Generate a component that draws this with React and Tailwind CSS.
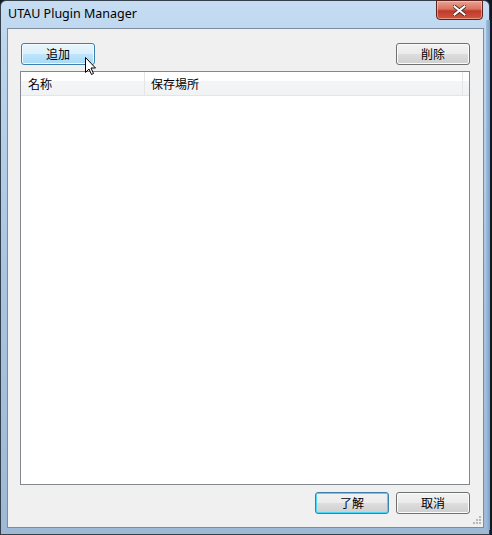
import React from "react";

const jp = { fontFamily: '"Noto Sans CJK JP", "Noto Sans", sans-serif' };

function Btn({ children, variant = "normal", className = "" }) {
  const base =
    "flex items-center justify-center w-[74px] h-[22px] rounded-[3px] border text-[12px] text-black leading-none";
  let v =
    "border-[#707070] bg-[linear-gradient(to_bottom,#f2f2f2_0%,#ebebeb_50%,#dddddd_51%,#cfcfcf_100%)] shadow-[inset_0_0_0_1px_#fcfcfc]";
  if (variant === "hover")
    v =
      "border-[#3c7fb1] bg-[linear-gradient(to_bottom,#eaf6fd_0%,#d9f0fc_50%,#bee6fd_51%,#a7d9f5_100%)] shadow-[inset_0_0_0_1px_#f3fbff]";
  if (variant === "default")
    v =
      "border-[#3c7fb1] bg-[linear-gradient(to_bottom,#f2f2f2_0%,#ebebeb_50%,#dddddd_51%,#cfcfcf_100%)] shadow-[inset_0_0_0_1px_#48d7fb]";
  return (
    <div className={`${base} ${v} ${className}`} style={jp}>
      {children}
    </div>
  );
}

export default function App() {
  return (
    <div className="relative w-[492px] h-[535px] overflow-hidden bg-[#0f1a26]">
      {/* window frame */}
      <div className="absolute left-0 top-0 w-[490px] h-[535px] rounded-t-[6px] border border-[#34404c] bg-[linear-gradient(to_bottom,#c6ddf2_0%,#bcd6ef_8%,#a9c5e2_50%,#9db9d6_100%)] flex flex-col">
        {/* title bar */}
        <div className="relative h-[27px] flex items-start">
          <div
            className="pl-[7px] pt-[7px] text-[12.5px] text-black leading-none"
            style={{ fontFamily: '"Noto Sans", "Open Sans", sans-serif' }}
          >
            UTAU Plugin Manager
          </div>
          <div className="absolute right-[6px] top-[-1px] w-[47px] h-[20px] rounded-b-[4px] border border-[#5a2320] bg-[linear-gradient(to_bottom,#e8a293_0%,#d9735f_45%,#c0392b_55%,#d0573e_100%)] flex items-center justify-center shadow-[inset_0_0_0_1px_rgba(255,220,210,0.5)]">
            <svg width="13" height="11" viewBox="0 0 13 11">
              <path
                d="M1.5 1.5 L11.5 9.5 M11.5 1.5 L1.5 9.5"
                stroke="#3c2a28"
                strokeWidth="3.6"
                strokeLinecap="square"
              />
              <path
                d="M1.5 1.5 L11.5 9.5 M11.5 1.5 L1.5 9.5"
                stroke="#ffffff"
                strokeWidth="2"
                strokeLinecap="square"
              />
            </svg>
          </div>
        </div>
        {/* client area */}
        <div className="ml-[6px] mr-[5px] h-[500px] border border-[#7d8c9c] bg-[#f0f0f0] flex flex-col pl-[12px] pr-[13px] pt-[14px] relative">
          <div className="flex justify-between">
            <Btn variant="hover" className="ml-[1px]">追加</Btn>
            <Btn>削除</Btn>
          </div>
          {/* list view */}
          <div className="mt-[6px] h-[414px] border border-[#828790] bg-white flex flex-col">
            <div className="h-[24px] flex border-b border-[#e5e5e5] bg-[linear-gradient(to_bottom,#ffffff_0%,#ffffff_40%,#f4f5f7_41%,#f1f2f4_100%)] text-[12px] text-black" style={jp}>
              <div className="w-[124px] border-r border-[#e5e5e5] pl-[7px] flex items-center">名称</div>
              <div className="w-[318px] border-r border-[#e5e5e5] pl-[6px] flex items-center">保存場所</div>
              <div className="flex-1" />
            </div>
          </div>
          <div className="flex justify-end gap-[7px] mt-[7px]">
            <Btn variant="default">了解</Btn>
            <Btn>取消</Btn>
          </div>
          {/* size grip */}
          <svg className="absolute right-[2px] bottom-[2px]" width="10" height="10" viewBox="0 0 10 10">
            {[
              [8, 0], [8, 3], [5, 3], [8, 6], [5, 6], [2, 6],
            ].map(([x, y], i) => (
              <rect key={i} x={x} y={y + 1} width="2" height="2" fill="#b8b8b8" />
            ))}
          </svg>
        </div>
      </div>
      {/* right glass highlight */}
      <div className="absolute right-[2px] top-[20px] w-[4px] h-[510px] bg-[linear-gradient(to_right,#9fbfe0,#7f9fc0)]" />
      {/* mouse cursor */}
      <svg className="absolute left-[85px] top-[57px]" width="12" height="19" viewBox="0 0 12 19">
        <path
          d="M0.5 0.5 L0.5 15.5 L4 12 L6.5 17.5 L8.5 16.5 L6 11 L10.5 11 Z"
          fill="#ffffff"
          stroke="#000000"
          strokeWidth="1"
          strokeLinejoin="miter"
        />
      </svg>
    </div>
  );
}
